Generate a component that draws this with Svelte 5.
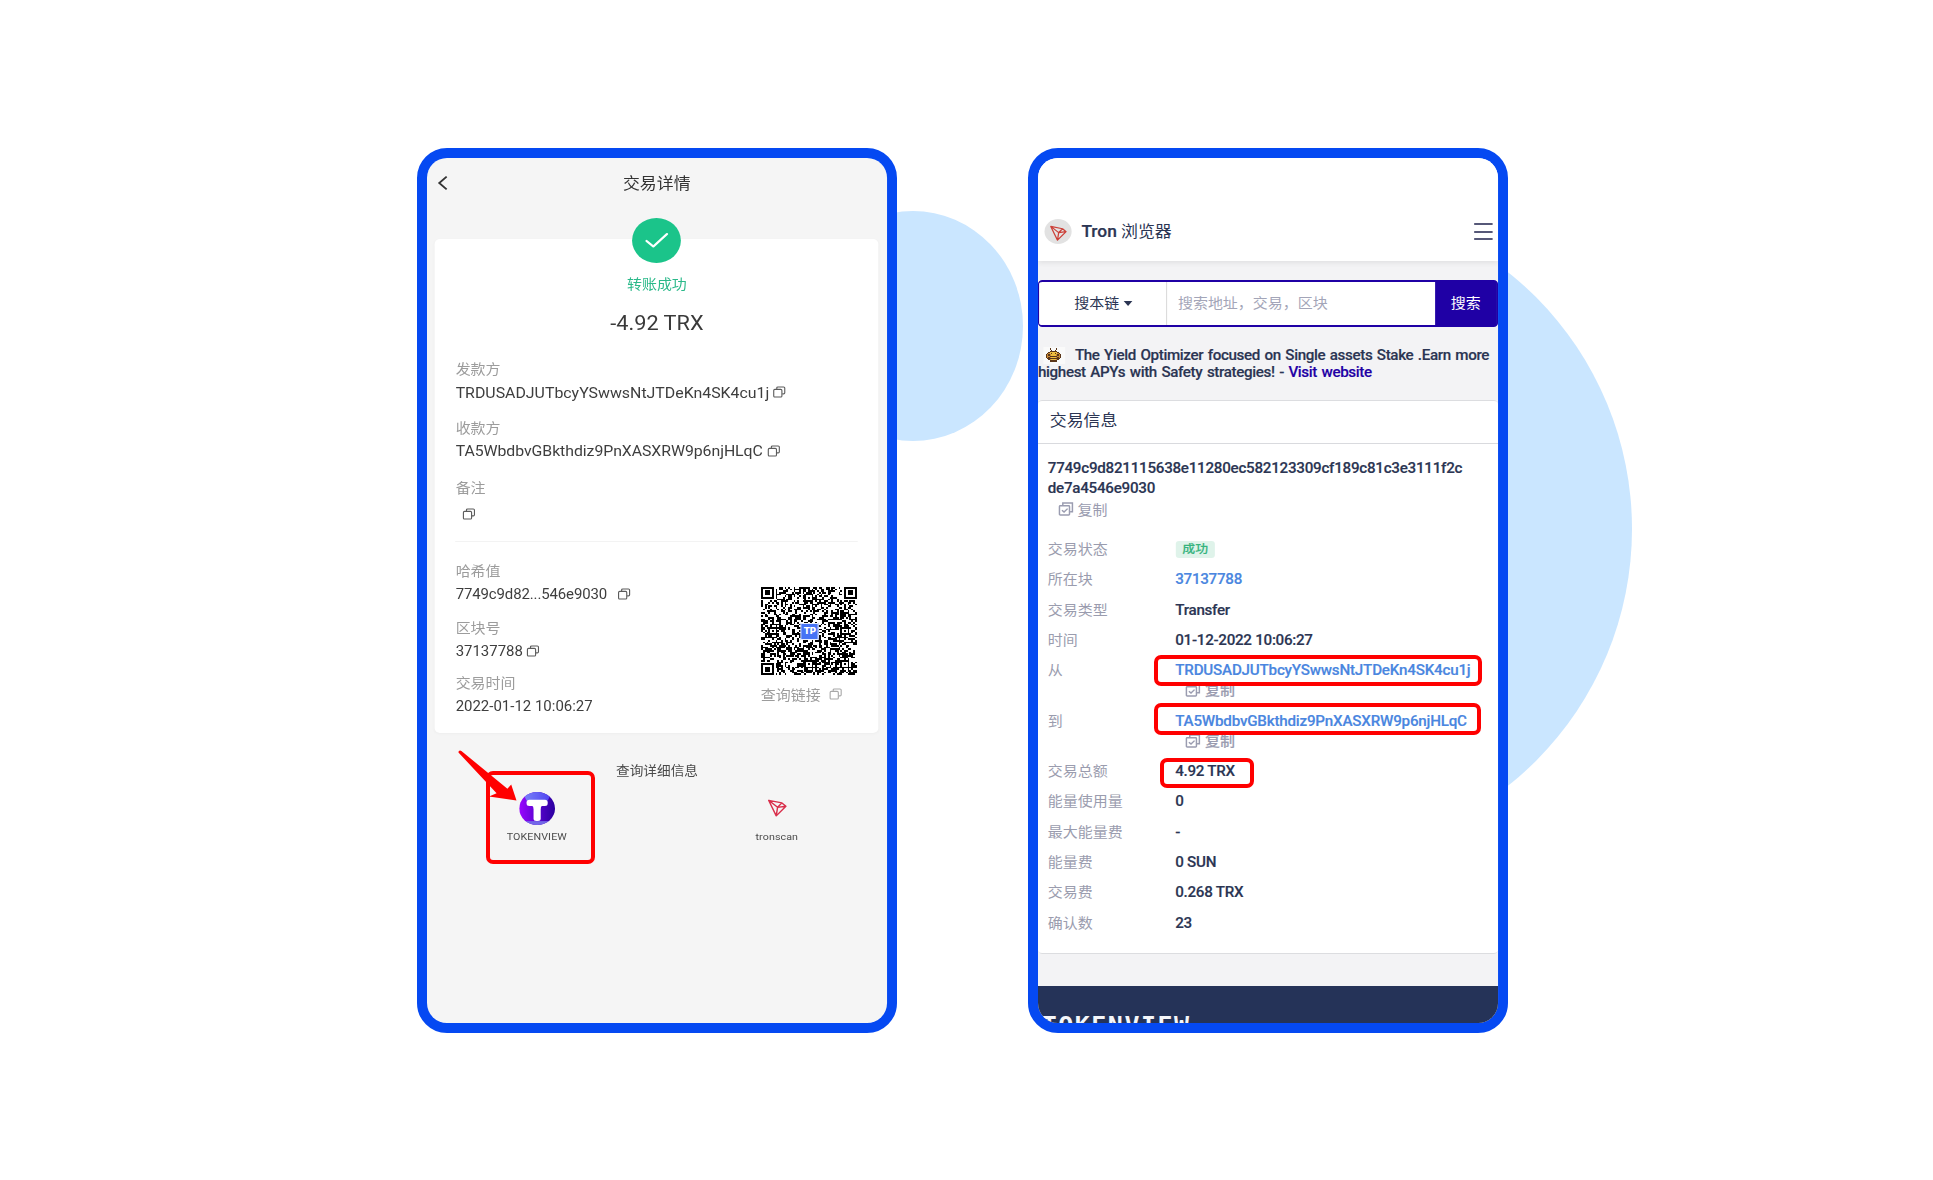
<script>
  const parties = [
    { label: '发款方', value: 'TRDUSADJUTbcyYSwwsNtJTDeKn4SK4cu1j', kind: 'sender' },
    { label: '收款方', value: 'TA5WbdbvGBkthdiz9PnXASXRW9p6njHLqC', kind: 'receiver' },
    { label: '备注', value: '', kind: 'memo' },
  ];
  const chainFields = [
    { label: '哈希值', value: '7749c9d82...546e9030', copy: true, kind: 'hash' },
    { label: '区块号', value: '37137788', copy: true, kind: 'block' },
    { label: '交易时间', value: '2022-01-12 10:06:27', copy: false, kind: 'time' },
  ];
  const details = [
    { label: '交易状态', value: '成功', kind: 'badge' },
    { label: '所在块', value: '37137788', kind: 'link' },
    { label: '交易类型', value: 'Transfer' },
    { label: '时间', value: '01-12-2022 10:06:27' },
    { label: '从', value: 'TRDUSADJUTbcyYSwwsNtJTDeKn4SK4cu1j', kind: 'link', copy: true },
    { label: '到', value: 'TA5WbdbvGBkthdiz9PnXASXRW9p6njHLqC', kind: 'link', copy: true },
    { label: '交易总额', value: '4.92 TRX' },
    { label: '能量使用量', value: '0' },
    { label: '最大能量费', value: '-' },
    { label: '能量费', value: '0 SUN' },
    { label: '交易费', value: '0.268 TRX' },
    { label: '确认数', value: '23' },
  ];

  // QR symbol: finder and alignment patterns over a seeded module field
  const N = 53;
  function ring(x, y, cx, cy) {
    return Math.max(Math.abs(x - cx), Math.abs(y - cy));
  }
  function buildQr() {
    let seed = 7749;
    let d = '';
    const finders = [[3, 3], [N - 4, 3], [3, N - 4]];
    const aligns = [[26, 6], [6, 26], [26, 46], [46, 26], [46, 46]];
    for (let y = 0; y < N; y++) {
      for (let x = 0; x < N; x++) {
        seed = (seed * 1103515245 + 12345) % 2147483648;
        let on = (seed >> 12) % 100 < 51;
        for (const [cx, cy] of aligns) {
          const r = ring(x, y, cx, cy);
          if (r <= 2) on = r !== 1;
        }
        for (const [cx, cy] of finders) {
          const r = ring(x, y, cx, cy);
          if (r <= 4) on = r === 3 || r <= 1;
        }
        if (on) d += `M${x} ${y}h1v1h-1z`;
      }
    }
    return d;
  }
  const qrPath = buildQr();

  // Bee emblem: b = brown, y = yellow, o = orange
  const bee = [
    '...b....b...',
    '....b..b....',
    '...bbbbbb...',
    '..byyyyyyb..',
    '.boybyybyob.',
    'boboyyyyobob',
    'boobbbbbboob',
    'boboyyyyobob',
    '.bbbbbbbbbb.',
    '..boyyyyob..',
    '...bbbbbb...',
  ];
  const beeColors = { b: '#5a3519', y: '#f0bd3e', o: '#c98a35' };
  const beeCells = bee.flatMap((row, y) =>
    [...row].map((c, x) => ({ x, y, fill: beeColors[c] })).filter((c) => c.fill)
  );
</script>

{#snippet copyIcon()}
  <svg class="copy" viewBox="0 0 12 12">
    <path d="M3.6 2.7V1.7Q3.6.6 4.7.6h5.6Q11.4.6 11.4 1.7v5.2Q11.4 8 10.3 8H9" />
    <rect x=".6" y="3.2" width="8" height="8.2" rx="1.1" />
  </svg>
{/snippet}

{#snippet copyCheck()}
  <span class="copy-check">
    <svg viewBox="0 0 14 14">
      <path d="M4 3V.8h9.2v9H11" />
      <rect x=".8" y="3.6" width="9.6" height="9.6" rx=".8" />
      <path d="M3.2 8.2l2 2 3.4-3.6" />
    </svg>
    复制
  </span>
{/snippet}

{#snippet tron()}
  <svg class="tron" viewBox="0 0 20 20">
    <path d="M1 1.2L15 4.2 19.2 8 9 19zM1 1.2L10.4 9.2 9 19M10.4 9.2L15 4.2M10.4 9.2L19.2 8" />
  </svg>
{/snippet}

<div class="stage">
  <div class="disc disc-small"></div>
  <div class="disc-clip"><div class="disc disc-large"></div></div>

  <section class="phone">
    <div class="screen wallet">
      <header class="wallet-bar">
        <svg class="back" viewBox="0 0 10 16"><path d="M9 1L1.4 8 9 15" /></svg>
        <h1>交易详情</h1>
      </header>
      <div class="receipt">
        <div class="tick">
          <svg viewBox="0 0 24 18"><path d="M1.5 9.5l6.8 6L22 2" /></svg>
        </div>
        <div class="state">转账成功</div>
        <div class="amount">-4.92 TRX</div>
        {#each parties as p}
          <div class="field {p.kind}">
            <div class="label">{p.label}</div>
            <div class="value"><span>{p.value}</span>{@render copyIcon()}</div>
          </div>
        {/each}
        <div class="rule"></div>
        <div class="chain">
          <div class="chain-fields">
            {#each chainFields as f}
              <div class="field {f.kind}">
                <div class="label">{f.label}</div>
                <div class="value">
                  <span>{f.value}</span>{#if f.copy}{@render copyIcon()}{/if}
                </div>
              </div>
            {/each}
          </div>
          <div class="qr">
            <div class="qr-code">
              <svg viewBox="0 0 53 53" preserveAspectRatio="none" shape-rendering="crispEdges"><path d={qrPath} /></svg>
              <span class="tp">TP</span>
            </div>
            <div class="qr-link"><span>查询链接</span>{@render copyIcon()}</div>
          </div>
        </div>
      </div>
      <div class="more">查询详细信息</div>
      <div class="explorers">
        <div class="explorer">
          <svg class="tv" viewBox="0 0 34 34">
            <defs>
              <linearGradient id="tvg" x1="0" x2="1">
                <stop offset="0" stop-color="#9a06ff" />
                <stop offset=".5" stop-color="#5a04cf" />
                <stop offset="1" stop-color="#2a009f" />
              </linearGradient>
              <linearGradient id="tvt" x1="0" x2="1">
                <stop offset="0" stop-color="#7a86f8" />
                <stop offset="1" stop-color="#4d3ff0" />
              </linearGradient>
              <clipPath id="tvc"><circle cx="17" cy="17" r="17" /></clipPath>
            </defs>
            <g clip-path="url(#tvc)">
              <rect width="34" height="34" fill="url(#tvg)" />
              <path d="M3 0h28L27 9H7z" fill="url(#tvt)" />
              <rect y="30" width="34" height="4" fill="#7468e8" />
            </g>
            <rect x="7" y="8" width="20" height="6.4" rx="2.6" fill="#fff" />
            <rect x="13.6" y="10" width="6.8" height="20" rx="2.6" fill="#fff" />
            <path d="M11 14.2q2.8 0 2.8 3h6.4q0-3 2.8-3z" fill="#fff" />
          </svg>
          <span>TOKENVIEW</span>
        </div>
        <div class="explorer">
          <div class="tron-slot">{@render tron()}</div>
          <span>tronscan</span>
        </div>
      </div>
    </div>
    <div class="mark mark-app"></div>
    <svg class="arrow" viewBox="0 0 60 54">
      <path d="M3.4 2.1Q1.8 1 .8 2.2T1.4 4.6L38.6 44.3 31 47.6 58.5 51.6 53.2 35.4 49.4 39.8z" />
    </svg>
  </section>

  <section class="phone">
    <div class="screen browser">
      <header class="site-bar">
        <div class="coin">{@render tron()}</div>
        <h2><b>Tron</b> 浏览器</h2>
        <div class="burger"><i></i><i></i><i></i></div>
      </header>
      <div class="search">
        <div class="scope">搜本链<i></i></div>
        <div class="query">搜索地址，交易，区块</div>
        <div class="go">搜索</div>
      </div>
      <p class="promo">
        <span class="bee"><svg viewBox="0 0 12 11" shape-rendering="crispEdges">
          {#each beeCells as c}<rect x={c.x} y={c.y} width="1" height="1" fill={c.fill} />{/each}
        </svg></span><span class="l1">The Yield Optimizer focused on Single assets Stake .Earn more</span><br /><span class="l2">highest APYs with Safety strategies! - <a>Visit website</a></span>
      </p>
      <div class="info">
        <h3>交易信息</h3>
        <div class="txid">7749c9d821115638e11280ec582123309cf189c81c3e3111f2c<br />de7a4546e9030</div>
        {@render copyCheck()}
        <div class="details">
          {#each details as d}
            <div class="row" class:tall={d.copy}>
              <div class="key">{d.label}</div>
              <div class="val">
                <span class={d.kind ?? 'plain'}>{d.value}</span>
                {#if d.copy}{@render copyCheck()}{/if}
              </div>
            </div>
          {/each}
        </div>
      </div>
      <footer><span>TOKENVIEW</span></footer>
    </div>
    <div class="mark mark-from"></div>
    <div class="mark mark-to"></div>
    <div class="mark mark-total"></div>
  </section>
</div>

<style>
  :global(body) { margin: 0; background: #fff; }
  .stage {
    position: relative;
    width: 1933px;
    height: 1180px;
    box-sizing: border-box;
    padding: 148px 0 0 416.5px;
    display: flex;
    gap: 131.5px;
    align-items: flex-start;
    overflow: hidden;
    background: #fff;
    font-family: Roboto, 'Noto Sans CJK SC', sans-serif;
  }
  svg { display: block; fill: none; overflow: visible; }
  h1, h2, h3, p { margin: 0; font-weight: 400; }

  .disc { position: absolute; border-radius: 50%; background: #cae6ff; }
  .disc-small { left: 803px; top: 210.5px; width: 220px; height: 230px; }
  .disc-clip { position: absolute; left: 1300px; top: 180px; width: 400px; height: 700px; overflow: hidden; }
  .disc-large { left: -324.5px; top: 20.5px; width: 656px; height: 656px; }

  .phone {
    position: relative;
    flex: none;
    box-sizing: border-box;
    width: 480px;
    height: 885px;
    border: 10px solid #0549f2;
    border-radius: 30px;
    background: #0549f2;
  }
  /* both captures are stretched horizontally inside their frames */
  .screen {
    position: relative;
    width: 424px;
    height: 865px;
    transform: scaleX(1.085);
    transform-origin: 0 0;
    overflow: hidden;
    border-radius: 18.4px / 20px;
  }
  .wallet { background: #f5f5f5; color: #3c3c3c; }
  .browser { background: #f3f3f5; color: #2b3553; display: flex; flex-direction: column; }

  .wallet-bar { display: flex; align-items: center; height: 50px; padding-left: 9.5px; }
  .back { width: 9px; height: 16px; stroke: #333; stroke-width: 1.9; }
  .wallet-bar h1 { flex: 1; text-align: center; font-size: 15.6px; padding: 0 19px 2px 0; color: #333; }
  .receipt {
    margin: 31px 8px 0 7.4px;
    height: 493.5px;
    box-sizing: border-box;
    padding: 0 18.6px 0 19px;
    background: #fff;
    border-radius: 5px;
    box-shadow: 0 1px 3px rgba(0, 0, 0, .03);
  }
  .tick {
    display: flex;
    align-items: center;
    justify-content: center;
    width: 45px;
    height: 45px;
    margin: 0 auto;
    position: relative;
    top: -21px;
    border-radius: 50%;
    background: #1bc48a;
  }
  .tick svg { width: 22px; height: 17px; stroke: #fff; stroke-width: 2.4; stroke-linecap: round; stroke-linejoin: round; }
  .state { height: 22px; line-height: 22px; margin-top: -11px; text-align: center; font-size: 13.8px; color: #2bb98a; }
  .amount { height: 26px; line-height: 26px; margin-top: 15px; text-align: center; font-size: 20px; color: #3a3a3a; }
  .field .label, .qr-link { font-size: 13.8px; color: #9c9c9c; }
  .field .label { height: 22px; line-height: 22px; }
  .field .value { display: flex; align-items: center; gap: 5px; height: 24px; line-height: 24px; font-size: 14.65px; color: #3e3e3e; }
  .copy { width: 11.3px; height: 12px; stroke: #5b5b5b; stroke-width: 1.1; }
  .sender { margin-top: 22px; }
  .sender .value { margin-top: .5px; }
  .sender .copy, .receiver .copy { margin-top: -1px; }
  .sender .copy { margin-left: -1px; }
  .receiver { margin-top: 12px; }
  .receiver .value { margin-top: .5px; letter-spacing: -.05px; font-size: 14.6px; }
  .memo { margin-top: 14px; }
  .memo .value { margin-top: 2.5px; padding-left: 2px; }
  .rule { height: 1px; margin: 15px 0 0; background: #f3f3f3; }
  .chain { display: flex; justify-content: space-between; }
  .chain-fields .value { font-size: 13.8px; }
  .hash { margin-top: 18.8px; }
  .hash .value { gap: 10px; letter-spacing: -.11px; }
  .block { margin-top: 10.6px; }
  .block .value { gap: 4px; }
  .time { margin-top: 9.4px; }
  .qr { margin-top: 45.5px; width: 89px; }
  .qr-code { position: relative; width: 88px; height: 88px; }
  .qr-code svg { width: 88px; height: 88px; }
  .qr-code path { fill: #000; }
  .tp {
    position: absolute;
    left: 36px;
    top: 36px;
    width: 15px;
    height: 15px;
    border: 1px solid #e9efff;
    background: #4673f5;
    color: #fff;
    font-weight: 900;
    font-size: 9px;
    line-height: 15px;
    text-align: center;
  }
  .qr-link { display: flex; align-items: center; gap: 8px; height: 22px; margin: 8px 0 0 -.8px; white-space: nowrap; }
  .qr-link .copy { stroke: #a8a8a8; }
  .more { height: 22px; line-height: 22px; margin-top: 27.5px; text-align: center; font-size: 12.6px; color: #4a4a4a; }
  .explorers { display: flex; margin-top: 9.5px; }
  .explorer { flex: none; width: 202.4px; display: flex; flex-direction: column; align-items: center; font-size: 9.85px; color: #4a4a4a; letter-spacing: .1px; }
  .explorer:last-child { width: 236px; margin-left: 2px; }
  .explorer span { height: 16px; line-height: 16px; margin-top: 4px; }
  .tv { width: 33px; height: 33px; }
  .tron-slot { height: 33px; display: flex; align-items: center; }
  .tron { width: 17.5px; height: 18px; stroke: #d9304c; stroke-width: 1.5; stroke-linejoin: round; }

  .mark { position: absolute; box-sizing: border-box; border: 4px solid #f00; border-radius: 7px; }
  .mark-app { left: 59.5px; top: 612.5px; width: 109px; height: 93.5px; }
  .arrow { position: absolute; left: 31px; top: 591px; width: 60px; height: 54px; fill: #f00; }
  .mark-from { left: 116px; top: 497px; width: 328px; height: 31px; }
  .mark-to { left: 116px; top: 545px; width: 327px; height: 31.5px; }
  .mark-total { left: 121.5px; top: 599.5px; width: 94px; height: 30px; }

  .site-bar {
    flex: none;
    display: flex;
    align-items: center;
    box-sizing: border-box;
    height: 102.5px;
    padding: 45px 5px 0 5.5px;
    background: #fff;
    box-shadow: 0 2px 5px rgba(0, 0, 0, .08);
  }
  .coin { display: flex; align-items: center; justify-content: center; width: 25px; height: 25px; border-radius: 50%; background: #e2e2e2; }
  .coin .tron { width: 15.5px; height: 16.5px; margin: 2px 0 0 1px; stroke: #cc4038; }
  .site-bar h2 { flex: 1; margin-left: 9.5px; padding-bottom: 3px; font-size: 15.6px; }
  .site-bar b { font-weight: 500; font-size: 16px; -webkit-text-stroke: .2px; }
  .burger { display: flex; flex-direction: column; gap: 5.7px; width: 17.5px; }
  .burger i { height: 2px; background: #565878; }
  .search {
    flex: none;
    display: flex;
    box-sizing: border-box;
    height: 47px;
    margin-top: 19.5px;
    border: 2px solid #1f00a5;
    border-width: 2px 1.8px;
    border-radius: 4px;
    background: #fff;
    font-size: 13.8px;
    line-height: 42px;
  }
  .scope { box-sizing: border-box; width: 118px; padding-left: 32.5px; padding-bottom: 1px; border-right: 1px solid #dcdcdc; display: flex; align-items: center; gap: 4px; }
  .scope i { margin-top: 1px; border: 4px solid transparent; border-top: 5px solid #2b3553; border-bottom: 0; }
  .query { flex: 1; padding-left: 10px; color: #a3a5b8; }
  .go { width: 57.5px; background: #1f00a5; color: #fff; text-align: center; }
  .promo { flex: none; height: 72.5px; padding-top: 20px; box-sizing: border-box; font-size: 14px; line-height: 17px; font-weight: 500; letter-spacing: -.34px; word-spacing: 1px; white-space: nowrap; -webkit-text-stroke: .15px; }
  .promo a { color: #1f00a5; }
  .bee { display: inline-block; width: 20px; height: 17px; margin: 0 9.5px 0 4.5px; vertical-align: top; background: #fafafa; }
  .bee svg { width: 14.5px; height: 14px; margin: 1px auto; }
  .info {
    flex: none;
    box-sizing: border-box;
    height: 554.5px;
    background: #fff;
    border: 1px solid #dcdde0;
    border-width: 1px 0;
    border-radius: 4px;
  }
  .info h3 { height: 42px; line-height: 41.5px; padding-left: 10.8px; font-size: 15.6px; border-bottom: 1px solid #d9dade; }
  .txid { margin-top: 14px; padding-left: 9px; font-size: 14px; line-height: 20.5px; font-weight: 500; letter-spacing: -.245px; -webkit-text-stroke: .15px; }
  .copy-check { display: flex; align-items: center; gap: 4.5px; height: 20px; padding-left: 18.5px; font-size: 13.8px; color: #9a9cb0; font-weight: 400; letter-spacing: 0; }
  .copy-check svg { width: 13.5px; height: 14px; stroke: #9a9cb0; stroke-width: 1.4; }
  .info > .copy-check { margin-top: 0; }
  .details { margin-top: 15.5px; }
  .row { display: flex; height: 30.3px; line-height: 30.3px; font-size: 14px; }
  .row.tall { height: 50.5px; }
  .key { width: 117.5px; padding-left: 9px; font-size: 13.8px; color: #9a9cae; }
  .val { font-weight: 500; letter-spacing: -.27px; -webkit-text-stroke: .15px; }
  .val .link { display: block; color: #4a86e0; }
  .tall .link { letter-spacing: -.2px; }
  .val .copy-check { margin-top: -5.2px; padding-left: 9.5px; height: 20px; line-height: 20px; font-weight: 500; }
  .badge { display: inline-block; height: 17px; line-height: 16px; padding: 0 6.5px; border-radius: 3px; background: #dff3ea; color: #36b37e; font-size: 11.9px; letter-spacing: 0; vertical-align: middle; margin-top: -2px; }
  footer { flex: 1; margin-top: 32px; background: #253358; overflow: hidden; }
  footer span {
    display: block;
    padding: 24px 0 0 3.4px;
    font: 700 23px/30px 'DejaVu Sans Mono', monospace;
    letter-spacing: 1.4px;
    color: #f4f6fa;
  }
</style>
